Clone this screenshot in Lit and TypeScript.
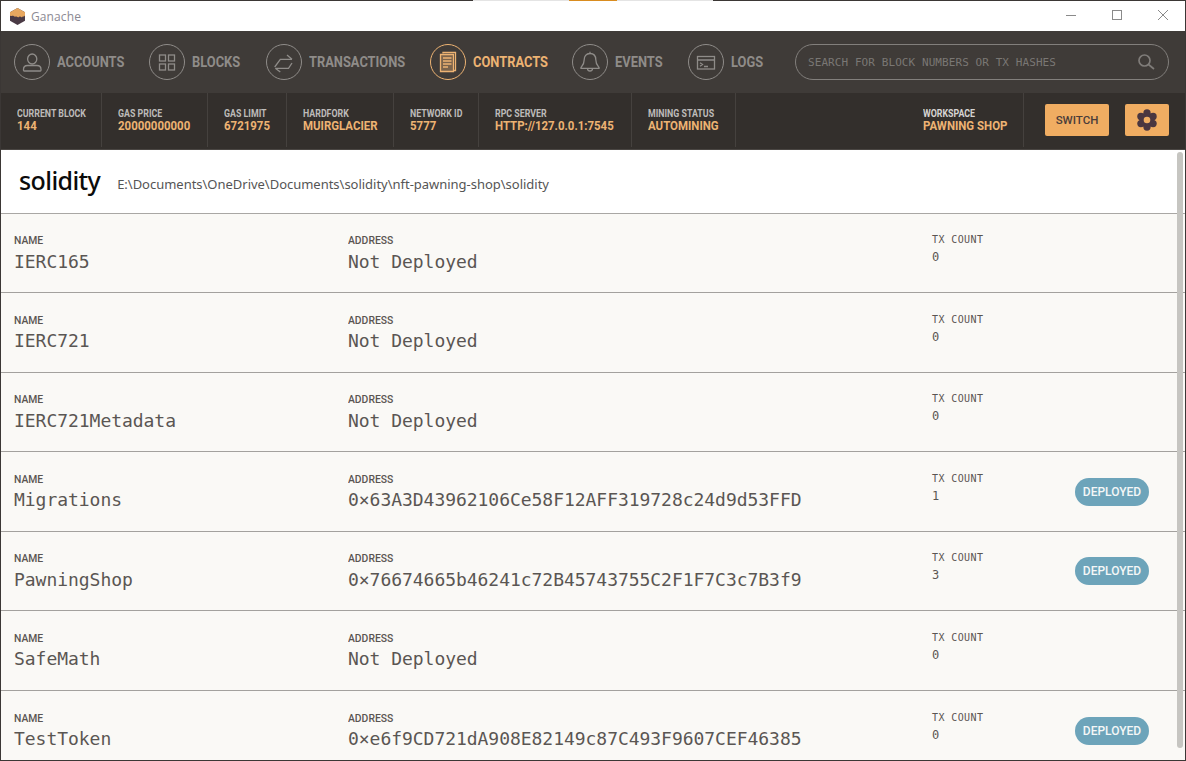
import { LitElement, html, css, svg } from "lit";
import { customElement } from "lit/decorators.js";

const nav = [
  ["ACCOUNTS", 67, svg`<ellipse cx="18.200" cy="15" rx="4.600" ry="5"/><path d="M9.500 25.500c0-2.600 2-4 4-4h9.500c2 0 4 1.400 4 4v.8a.7.7 0 0 1-.7.7H10.200a.7.7 0 0 1-.7-.7z"/>`],
  ["BLOCKS", 49, svg`<rect x="10.500" y="11" width="6" height="6"/><rect x="19.500" y="11" width="6" height="6"/><rect x="10.500" y="20" width="6" height="6"/><rect x="19.500" y="20" width="6" height="6"/>`],
  ["TRANSACTIONS", 96, svg`<path d="M8.700 23l5.600-7.700H26M21 11l5 4.300M26 19l-3.500 5.300H9.500M14.300 28l-5-3.700"/>`],
  ["CONTRACTS", 74, svg`<path d="M13 9.500V8.500h12.500v18H23.500"/><path d="M10.500 10.500H23.500V27.500H10.500z" fill="currentColor" fill-opacity=".35"/><path d="M13 14h8.500M13 17h8.500M13 20h8.500M13 23h5" stroke-width="1.700"/>`],
  ["EVENTS", 48, svg`<path d="M18 9.500c-4 0-5.800 3-5.800 6.300 0 4.200-1.700 5.700-3.200 7.700v.9h18v-.9c-1.500-2-3.200-3.500-3.200-7.700 0-3.300-1.800-6.300-5.800-6.300zM15.500 24.500a2.500 2.500 0 0 0 5 0M18 9.500V7.800"/>`],
  ["LOGS", 32, svg`<rect x="9.500" y="12.500" width="17" height="12.500"/><path d="M9.500 16h17M12 18.800l2.500 1.700L12 22.200M16 22.500h4"/>`],
] as [string, number, unknown][];

const stats = [
  ["CURRENT BLOCK", "144", 101],
  ["GAS PRICE", "20000000000", 106],
  ["GAS LIMIT", "6721975", 79],
  ["HARDFORK", "MUIRGLACIER", 107],
  ["NETWORK ID", "5777", 85],
  ["RPC SERVER", "HTTP://127.0.0.1:7545", 153],
  ["MINING STATUS", "AUTOMINING", 104],
] as [string, string, number][];

const rows = [
  ["IERC165", "Not Deployed", "0", false],
  ["IERC721", "Not Deployed", "0", false],
  ["IERC721Metadata", "Not Deployed", "0", false],
  ["Migrations", "0×63A3D43962106Ce58F12AFF319728c24d9d53FFD", "1", true],
  ["PawningShop", "0×76674665b46241c72B45743755C2F1F7C3c7B3f9", "3", true],
  ["SafeMath", "Not Deployed", "0", false],
  ["TestToken", "0×e6f9CD721dA908E82149c87C493F9607CEF46385", "0", true],
] as [string, string, string, boolean][];

const lobes = [30, 90, 150, 210, 270, 330];

@customElement("app-root")
export class AppRoot extends LitElement {
  static styles = css`
    :host {
      display: flex;
      flex-direction: column;
      width: 1186px;
      height: 761px;
      overflow: hidden;
      box-sizing: border-box;
      border: 1px solid #3b3735;
      border-top: 0;
      background: #fff;
      font-family: Roboto, "Liberation Sans", sans-serif;
    }
    .edge { display: flex; height: 1px; margin: 0 -1px; flex: none; }
    .edge i { display: block; height: 1px; }
    .dark1 { width: 473px; background: #3b3735; }
    .light { width: 96px; background: #e4e4e4; }
    .orange { width: 48px; background: #d98c1f; }
    .dark2 { flex: 1; background: #3b3735; }
    .titlebar {
      flex: none; height: 30px; display: flex; align-items: center; background: #fff;
      padding-left: 9px; box-sizing: border-box;
    }
    .logo { width: 15px; height: 17px; margin-right: 6px; }
    .title { font: 12px "Open Sans", sans-serif; color: #8c8a93; letter-spacing: 0.1px; flex: 1; }
    .winbtns { display: flex; height: 30px; align-items: center; margin-right: -1px; }
    .winbtns svg { width: 46px; height: 30px; stroke: #8a8a8a; fill: none; }
    .nav {
      flex: none; height: 62px; background: #3f3b38; display: flex; align-items: center;
      padding-left: 13px; box-sizing: border-box;
    }
    .navitem { display: flex; align-items: center; color: #8f8c89; margin-right: 25px; }
    .navitem.active { color: #edb373; }
    .circle {
      width: 36px; height: 36px; border: 1.500px solid currentColor; border-radius: 50%;
      display: flex; align-items: center; justify-content: center; margin-right: 7px; box-sizing: border-box;
      flex: none;
    }
    .circle svg { width: 36px; height: 36px; flex: none; fill: none; stroke: currentColor; stroke-width: 1.300; }
    .navlabel { display: block; font-size: 15.500px; font-weight: 700; white-space: nowrap; }
    .navlabel span { display: inline-block; transform: scaleX(0.83); transform-origin: left center; }
    .search {
      margin-left: auto; margin-right: 16px; width: 374px; height: 36px; box-sizing: border-box; flex: none;
      border: 1px solid #827f7c; border-radius: 18px; display: flex; align-items: center;
      padding: 0 13px 0 12px; justify-content: space-between;
    }
    .search span {
      font: 11px "DejaVu Sans Mono", monospace; letter-spacing: 0.08px; color: #7a7774;
    }
    .search svg { width: 18px; height: 18px; stroke: #7f7c79; fill: none; stroke-width: 1.700; }
    .status {
      flex: none; height: 57px; background: #332f2c; display: flex; align-items: stretch;
      border-bottom: 1px solid #4a4643; box-sizing: border-box;
    }
    .stat {
      box-sizing: border-box; padding: 15px 0 0 16px; border-right: 1px solid #45413e;
      margin-bottom: 2px;
    }
    .stat.wide { margin-left: auto; width: 117px; padding-left: 16px; border: 0; border-right: 1px solid #45413e; }
    .stat b { display: block; font-size: 10.500px; line-height: 11px; font-weight: 700; color: #bdbbb9; white-space: nowrap; transform: scaleX(0.84); transform-origin: left center; }
    .stat em { display: block; font-style: normal; font-size: 13px; line-height: 14px; font-weight: 700; color: #edb373; white-space: nowrap; transform: scaleX(0.88); transform-origin: left center; }
    .stat.wide b { color: #d6d4d2; }
    .actions { display: flex; align-items: flex-start; padding-top: 11px; padding-right: 16px; gap: 16px; margin-left: 21px; }
    .btn {
      height: 32px; border-radius: 2px; background: #f0ad62; color: #4a3c3a; border: 0;
      display: flex; align-items: center; justify-content: center; font: 500 11.500px Roboto, sans-serif;
      padding: 0; box-sizing: border-box;
    }
    .btn.switch { width: 64px; }
    .btn.gear { width: 44px; }
    .btn svg { width: 22px; height: 22px; fill: #4a3640; }
    .btn svg .hole { fill: #f0ad62; }
    .main { flex: 1; min-height: 0; display: flex; position: relative; background: #faf9f6; }
    .scroll { flex: 1; min-width: 0; overflow: hidden; }
    .head {
      height: 63.500px; background: #fff; display: flex; align-items: center; padding-left: 18px;
      border-bottom: 1px solid #a9a7a4; box-sizing: border-box;
    }
    .head h1 { margin: -2px 17px 0 0; font: 500 25px "Noto Sans", sans-serif; color: #0b0b0b; letter-spacing: -0.6px; }
    .head span { font: 13px "Noto Sans", sans-serif; color: #555; letter-spacing: -0.02px; margin-top: 5px; }
    .row {
      height: 79.600px; box-sizing: border-box; border-bottom: 1px solid #a3a19e;
      background: #faf9f6; display: grid; grid-template-columns: 334px 584px 143px 1fr; padding: 20.500px 0 0 13px;
    }
    .row label { display: block; font-size: 11.500px; font-weight: 500; line-height: 13px; color: #5a5552; transform: scaleX(0.9); transform-origin: left center; }
    .row .val { font: 18px/22px "DejaVu Sans Mono", monospace; letter-spacing: -0.04px; color: #5a5653; margin-top: 3.500px; white-space: pre; }
    .row .tx { margin-top: -1px; }
    .row .tx label { font: 10px/13px "DejaVu Sans Mono", monospace; letter-spacing: 0.4px; transform: none; }
    .row .tx .val { font-size: 12px; line-height: 16px; margin-top: 3px; }
    .badge {
      width: 74px; height: 28px; border-radius: 14px; background: #6da4ba; color: #f4f7f7;
      font-size: 12px; font-weight: 500; display: flex; align-items: center; justify-content: center;
      margin-top: 5px;
    }
    .sb { position: absolute; right: 2px; top: 2px; bottom: 12px; width: 6px; border-radius: 3px; background: #c6c5c1; }
  `;

  render() {
    return html`
      <div class="edge">
        <i class="dark1"></i><i class="light"></i><i class="orange"></i><i class="light"></i><i class="dark2"></i>
      </div>
      <div class="titlebar">
        <svg class="logo" viewBox="0 0 15 17">
          <path d="M7.500 0L15 4.200v8.600L7.500 17 0 12.800V4.200z" fill="#4a3a45"/>
          <path d="M7.500 0L15 4.200v3.300c-1 1.500-2 .5-2.600 1.300-.6.900-1.400.4-2-.2-.8-.7-1.300.5-2.400.6-1 0-1.400-1-2.400-.6-.8.300-1.400-.2-2-.6C2.800 7.500 1 8.600 0 7.500V4.200z" fill="#e8a860"/>
        </svg>
        <span class="title">Ganache</span>
        <div class="winbtns">
          <svg viewBox="0 0 46 30"><path d="M18 14.500h10"/></svg>
          <svg viewBox="0 0 46 30"><rect x="18.500" y="9.500" width="9" height="9"/></svg>
          <svg viewBox="0 0 46 30"><path d="M18 9l10 10M28 9L18 19"/></svg>
        </div>
      </div>
      <div class="nav">
        ${nav.map(
          ([k, w, icon]) => html`<div class="navitem ${k === "CONTRACTS" ? "active" : ""}">
            <div class="circle"><svg viewBox="0 0 36 36">${icon}</svg></div>
            <div class="navlabel" style="width:${w}px"><span>${k}</span></div>
          </div>`
        )}
        <div class="search">
          <span>SEARCH FOR BLOCK NUMBERS OR TX HASHES</span>
          <svg viewBox="0 0 18 18"><circle cx="7.500" cy="7.500" r="5.500"/><path d="M11.500 11.500L17 16"/></svg>
        </div>
      </div>
      <div class="status">
        ${stats.map(
          ([a, b, w]) => html`<div class="stat" style="width:${w}px"><b>${a}</b><em>${b}</em></div>`
        )}
        <div class="stat wide"><b>WORKSPACE</b><em>PAWNING SHOP</em></div>
        <div class="actions">
          <button class="btn switch">SWITCH</button>
          <button class="btn gear">
            <svg viewBox="0 0 20 20">
              <circle cx="10" cy="10" r="6.800"/>
              ${lobes.map((a) => {
                const r = (a * Math.PI) / 180;
                return svg`<circle cx=${10 + 6.4 * Math.cos(r)} cy=${10 + 6.4 * Math.sin(r)} r="3.300"/>`;
              })}
              <circle class="hole" cx="10" cy="10" r="3"/>
            </svg>
          </button>
        </div>
      </div>
      <div class="main">
        <div class="scroll">
          <div class="head">
            <h1>solidity</h1>
            <span>E:\\Documents\\OneDrive\\Documents\\solidity\\nft-pawning-shop\\solidity</span>
          </div>
          ${rows.map(
            ([n, a, t, d]) => html`<div class="row">
              <div><label>NAME</label><div class="val">${n}</div></div>
              <div><label>ADDRESS</label><div class="val">${a}</div></div>
              <div class="tx"><label>TX COUNT</label><div class="val">${t}</div></div>
              <div>${d ? html`<div class="badge">DEPLOYED</div>` : ""}</div>
            </div>`
          )}
        </div>
        <div class="sb"></div>
      </div>
    `;
  }
}
